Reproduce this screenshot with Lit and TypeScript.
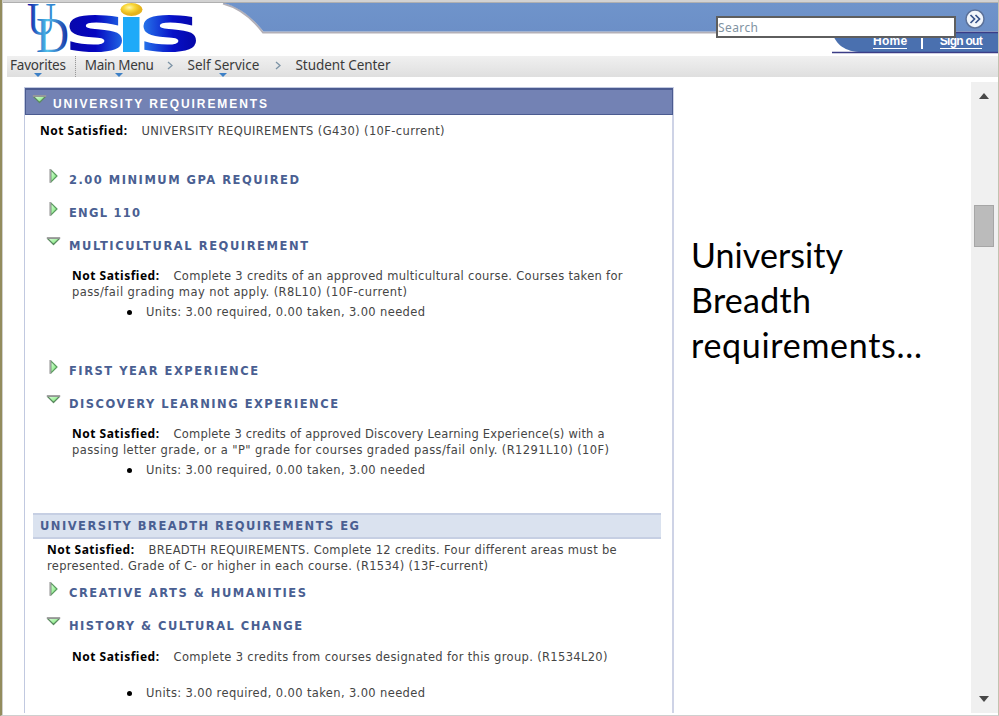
import { LitElement, html, css, svg } from "lit";
import { customElement, property } from "lit/decorators.js";

/** A single line of text tracked so that it spans a given measure. */
@customElement("fit-text")
class FitText extends LitElement {
  @property({ type: Number }) span = 0;
  @property() text = "";
  static styles = css`
    :host { display: inline-block; white-space: pre; }
  `;
  render() {
    return html`<span>${this.text}</span>`;
  }
  updated() {
    const el = this.renderRoot.querySelector("span") as HTMLElement;
    el.style.letterSpacing = "0px";
    const natural = el.getBoundingClientRect().width;
    el.style.letterSpacing = `${(this.span - natural) / (this.text.length - 1)}px`;
  }
}

type Piece = [string, number];

interface Requirement {
  title: Piece;
  open?: boolean;
  first?: Piece;
  second?: Piece;
  last?: boolean;
}

const UNITS: Piece = ["Units: 3.00 required, 0.00 taken, 3.00 needed", 279];

const GENERAL: Requirement[] = [
  { title: ["2.00 MINIMUM GPA REQUIRED", 230] },
  { title: ["ENGL 110", 71] },
  {
    title: ["MULTICULTURAL REQUIREMENT", 239],
    open: true,
    first: ["Complete 3 credits of an approved multicultural course. Courses taken for", 449],
    second: ["pass/fail grading may not apply. (R8L10) (10F-current)", 335],
  },
  { title: ["FIRST YEAR EXPERIENCE", 189] },
  {
    title: ["DISCOVERY LEARNING EXPERIENCE", 269],
    open: true,
    first: ["Complete 3 credits of approved Discovery Learning Experience(s) with a", 431],
    second: ['passing letter grade, or a "P" grade for courses graded pass/fail only. (R1291L10) (10F)', 537],
  },
];

const BREADTH: Requirement[] = [
  { title: ["CREATIVE ARTS & HUMANITIES", 237] },
  {
    title: ["HISTORY & CULTURAL CHANGE", 233],
    open: true,
    first: ["Complete 3 credits from courses designated for this group. (R1534L20)", 434],
    last: true,
  },
];

const fit = ([text, span]: Piece) => html`<fit-text .text=${text} .span=${span}></fit-text>`;

const arrowStops = svg`<defs><linearGradient id="g" x1="0" y1="0" x2="1" y2="1">
  <stop offset="0" stop-color="#e2ffe0"/><stop offset=".6" stop-color="#98f095"/><stop offset="1" stop-color="#5cd45c"/>
</linearGradient></defs>`;

const arrowDown = html`<svg class="arrow" width="16" height="16" viewBox="0 0 16 16">
  ${arrowStops}
  <path d="M1.5 4.500H13.5L7.500 10.5Z" fill="url(#g)" stroke="#5b8a60" stroke-width="1.2" stroke-linejoin="round"/>
  <path d="M.8 4H14.2" stroke="#9a9a9a" stroke-width="1.8"/>
</svg>`;

const arrowRight = html`<svg class="arrow" width="16" height="16" viewBox="0 0 16 16">
  ${arrowStops}
  <path d="M4.800 1.800V14.200L11 8Z" fill="url(#g)" stroke="#5b9a60" stroke-width="1.2" stroke-linejoin="round"/>
  <path d="M4.300 1V14.800" stroke="#a2a2a2" stroke-width="1.8"/>
</svg>`;

@customElement("app-root")
class AppRoot extends LitElement {
  static styles = css`
    :host {
      display: block;
      box-sizing: border-box;
      width: 999px;
      height: 716px;
      overflow: hidden;
      background: #fff;
      border-left: 2px solid #938c5d;
      border-right: 1px solid #c3c2b0;
      border-bottom: 1px solid #cfcfcf;
      font: 12px/16px "Noto Sans", "Open Sans", sans-serif;
      color: #454545;
    }
    .frame { height: 715px; border-left: 1px solid #d0d0cc; box-sizing: border-box; }
    .header { position: relative; height: 56px; border-top: 2px solid #d2d2d2; box-sizing: border-box; }
    .art { position: absolute; left: 0; top: -2px; }
    .links {
      position: absolute; right: 16px; top: 32px; display: flex; align-items: center;
      font: bold 12px/13px "Liberation Sans", Arial, sans-serif; color: #fff;
    }
    .link { border-bottom: 1.500px solid #fff; height: 13px; }
    .split { width: 1.4px; height: 12px; background: #fff; margin: 3px 17px 0 14px; }
    .search {
      position: absolute; left: 713px; top: 14px; width: 240px; height: 22px; box-sizing: border-box;
      background: #fff; border: 2px solid #5e5e5e; line-height: 19px; color: #8193a2;
    }
    .go { position: absolute; left: 962px; top: 7px; }

    .nav {
      height: 21px; margin-left: 4px; padding-left: 3px; display: flex; font-size: 13.5px; line-height: 18px;
      color: #3a3a3a; background: linear-gradient(#f0f0f0, #dfdfdf);
    }
    .crumb { display: flex; flex-direction: column; align-items: center; }
    .crumb::after {
      content: ""; border: 4px solid transparent; border-top: 4px solid #3d80c6; border-bottom: 0; margin-top: -1px;
    }
    .crumb.plain::after { display: none; }
    .bar { width: 1px; margin: 0 9px 0 9px; background: repeating-linear-gradient(#999 0 1px, #ddd 1px 2px); }
    .chevron { margin-top: 5px; }
    .c1 { margin-left: 14px; margin-right: 14px; }
    .c2 { margin-left: 15px; margin-right: 15px; }

    .main { display: flex; height: 636px; padding-top: 5px; box-sizing: border-box; }
    .panel {
      width: 650px; height: 626px; margin: 5px 0 0 21px; box-sizing: border-box;
      border: 1px solid #c1c9e0; border-right: 2px solid #ced3e6; border-bottom: 0;
    }
    .banner {
      height: 27px; box-sizing: border-box; display: flex; align-items: center; background: #7382b4;
      border: 1px solid #4b5b90; border-top-width: 2px; color: #fff; padding: 3px 0 0 6px; margin-right: -1px;
      font: bold 12px/16px "Liberation Sans", Arial, sans-serif;
    }
    .banner .arrow { margin: -7px 5px 0 0; }
    .summary { display: flex; padding: 8px 0 0 15px; height: 48px; box-sizing: border-box; }
    .label { font: bold 12px/16px "Noto Sans", "Open Sans", sans-serif; color: #000; margin-right: 14px; }
    .summary, .detail, .intro { font: 11.5px/16px "DejaVu Sans", Verdana, sans-serif; }
    .head {
      height: 33px; display: flex; align-items: center; padding-left: 21px; color: #4a5f92;
      font: bold 11.5px/16px "DejaVu Sans", Verdana, sans-serif;
    }
    .head .arrow { margin: -8px 7px 0 0; }
    .detail { padding: 6px 0 0 47px; height: 92px; box-sizing: border-box; }
    .detail.end { padding-top: 7px; }
    .text { display: flex; height: 16px; }
    .units { display: flex; align-items: center; height: 16px; margin: 4px 0 0 55px; }
    .end .units { margin-top: 20px; }
    .dot { width: 5px; height: 5px; border-radius: 50%; background: #000; margin-right: 14px; }
    .band {
      height: 26px; box-sizing: border-box; margin: 1px 11px 0 8px; padding: 3px 0 0 7px; background: #dae2ef;
      border-top: 2px solid #c6cfe3; border-bottom: 2px solid #c6cfe3; color: #4a5f92;
      font: bold 11.5px/16px "DejaVu Sans", Verdana, sans-serif;
    }
    .intro { padding: 3px 0 2px 22px; }
    .caption {
      flex: 1; padding: 150px 0 0 17px; color: #000; font: 34px/45px Lato, "Open Sans", sans-serif;
    }
    .line { display: block; height: 45px; }
    .scroll { width: 27px; background: #f0f0f0; display: flex; flex-direction: column; height: 631px; }
    .up { border: 5.5px solid transparent; border-bottom: 6px solid #484848; border-top: 0; margin: 11px auto 0 8px; }
    .thumb { width: 20px; height: 42px; box-sizing: border-box; background: #bbb; border: 1px solid #a6a6a6; margin: 106px 0 0 3px; }
    .down { border: 5.5px solid transparent; border-top: 6px solid #484848; border-bottom: 0; margin: auto auto 11px 8px; }
  `;

  header() {
    return html`<div class="header">
      <svg class="art" width="995" height="56" viewBox="3 0 995 56">
        <defs>
          <linearGradient id="top" x1="0" y1="0" x2="0" y2="1"><stop offset="0" stop-color="#6f94cb"/><stop offset="1" stop-color="#6c8fc7"/></linearGradient>
          <linearGradient id="ud" x1="0" y1="0" x2="1" y2="0"><stop offset="0" stop-color="#0508a0"/><stop offset=".5" stop-color="#42a4dd"/><stop offset="1" stop-color="#2c7ccc"/></linearGradient>
          <linearGradient id="dd" x1="0" y1="0" x2="1" y2="0"><stop offset="0" stop-color="#1c60c0"/><stop offset=".35" stop-color="#55c3ec"/><stop offset="1" stop-color="#1228a0"/></linearGradient>
          <linearGradient id="s1" x1="0" y1="0" x2="1" y2="0"><stop offset="0" stop-color="#0808a8"/><stop offset=".5" stop-color="#0505c0"/><stop offset="1" stop-color="#2477ea"/></linearGradient>
          <linearGradient id="s2" x1="0" y1="0" x2="1" y2="0"><stop offset="0" stop-color="#2b86f0"/><stop offset=".55" stop-color="#0710c8"/><stop offset="1" stop-color="#0505a0"/></linearGradient>
          <radialGradient id="sun" cx=".4" cy=".35"><stop offset="0" stop-color="#fff7b0"/><stop offset=".5" stop-color="#f9d83a"/><stop offset="1" stop-color="#e6b41c"/></radialGradient>
        </defs>
        <path d="M223 3.500C240 8 253 19 263 32.500H998" fill="none" stroke="#b3b0b8" stroke-width="2"/>
        <path d="M223 3C240 7 253 18 263.500 31.500H998V3Z" fill="url(#top)"/>
        <path d="M3 2.500H998" stroke="#b0b0b0" stroke-width="1"/>
        <path d="M832 32C835 42 842 51 859 52H998V32Z" fill="#4a70af"/>
        <path d="M832 52.500H998M956 32.500H998" stroke="#3b3d86" stroke-width="1.6"/>
        <text x="27" y="34.500" font-family="Liberation Serif" font-size="46" textLength="29" lengthAdjust="spacingAndGlyphs" fill="url(#ud)">U</text>
        <text x="36" y="51.500" font-family="Liberation Serif" font-size="50" textLength="33" lengthAdjust="spacingAndGlyphs" fill="url(#dd)">D</text>
        <text x="64" y="51" font-family="DejaVu Sans" font-weight="bold" font-size="64" textLength="63" lengthAdjust="spacingAndGlyphs" fill="url(#s1)">s</text>
        <rect x="123" y="17" width="16.500" height="35" fill="#1eaaf8"/>
        <ellipse cx="131.500" cy="9.500" rx="11" ry="6.500" fill="url(#sun)"/>
        <text x="138" y="51" font-family="DejaVu Sans" font-weight="bold" font-size="64" textLength="63" lengthAdjust="spacingAndGlyphs" fill="url(#s2)">s</text>
      </svg>
      <div class="links">
        <span class="link">${fit(["Home", 34])}</span><span class="split"></span><span class="link">${fit(["Sign out", 43])}</span>
      </div>
      <div class="search">${fit(["Search", 40])}</div>
      <svg class="go" width="20" height="20" viewBox="0 0 20 20">
        <circle cx="10" cy="10" r="9" fill="#f1f5fb" stroke="#5c7199" stroke-width="1.5"/>
        <path d="M5.500 6L9.500 10L5.500 14M10.500 6L14.500 10L10.500 14" fill="none" stroke="#37528a" stroke-width="1.7"/>
      </svg>
    </div>`;
  }

  chevron(cls: string) {
    return html`<svg class="chevron ${cls}" width="6" height="9" viewBox="0 0 6 9">
      <path d="M1 1L5 4.500L1 8" fill="none" stroke="#7c93a5" stroke-width="1.3"/>
    </svg>`;
  }

  nav() {
    return html`<div class="nav">
      <div class="crumb">${fit(["Favorites", 56])}</div>
      <div class="bar"></div>
      <div class="crumb">${fit(["Main Menu", 69])}</div>
      ${this.chevron("c1")}
      <div class="crumb">${fit(["Self Service", 72])}</div>
      ${this.chevron("c2")}
      <div class="crumb plain">${fit(["Student Center", 95])}</div>
    </div>`;
  }

  label() {
    return html`<span class="label">${fit(["Not Satisfied:", 87])}</span>`;
  }

  requirement(r: Requirement) {
    return html`
      <div class="head">${r.open ? arrowDown : arrowRight}${fit(r.title)}</div>
      ${r.open
        ? html`<div class="detail ${r.last ? "end" : ""}">
            <div class="text">${this.label()}${fit(r.first!)}</div>
            ${r.second ? html`<div class="text">${fit(r.second)}</div>` : ""}
            <div class="units"><span class="dot"></span>${fit(UNITS)}</div>
          </div>`
        : ""}
    `;
  }

  render() {
    return html`<div class="frame">
      ${this.header()}${this.nav()}
      <div class="main">
        <div class="panel">
          <div class="banner">${arrowDown}${fit(["UNIVERSITY REQUIREMENTS", 214])}</div>
          <div class="summary">${this.label()}${fit(["UNIVERSITY REQUIREMENTS (G430) (10F-current)", 303])}</div>
          ${GENERAL.map((r) => this.requirement(r))}
          <div class="band">${fit(["UNIVERSITY BREADTH REQUIREMENTS EG", 319])}</div>
          <div class="intro">
            <div class="text">${this.label()}${fit(["BREADTH REQUIREMENTS. Complete 12 credits. Four different areas must be", 468])}</div>
            <div class="text">${fit(["represented. Grade of C- or higher in each course. (R1534) (13F-current)", 441])}</div>
          </div>
          ${BREADTH.map((r) => this.requirement(r))}
        </div>
        <div class="caption">
          <span class="line">${fit(["University", 152])}</span>
          <span class="line">${fit(["Breadth", 120])}</span>
          <span class="line">${fit(["requirements…", 231])}</span>
        </div>
        <div class="scroll"><div class="up"></div><div class="thumb"></div><div class="down"></div></div>
      </div>
    </div>`;
  }
}
